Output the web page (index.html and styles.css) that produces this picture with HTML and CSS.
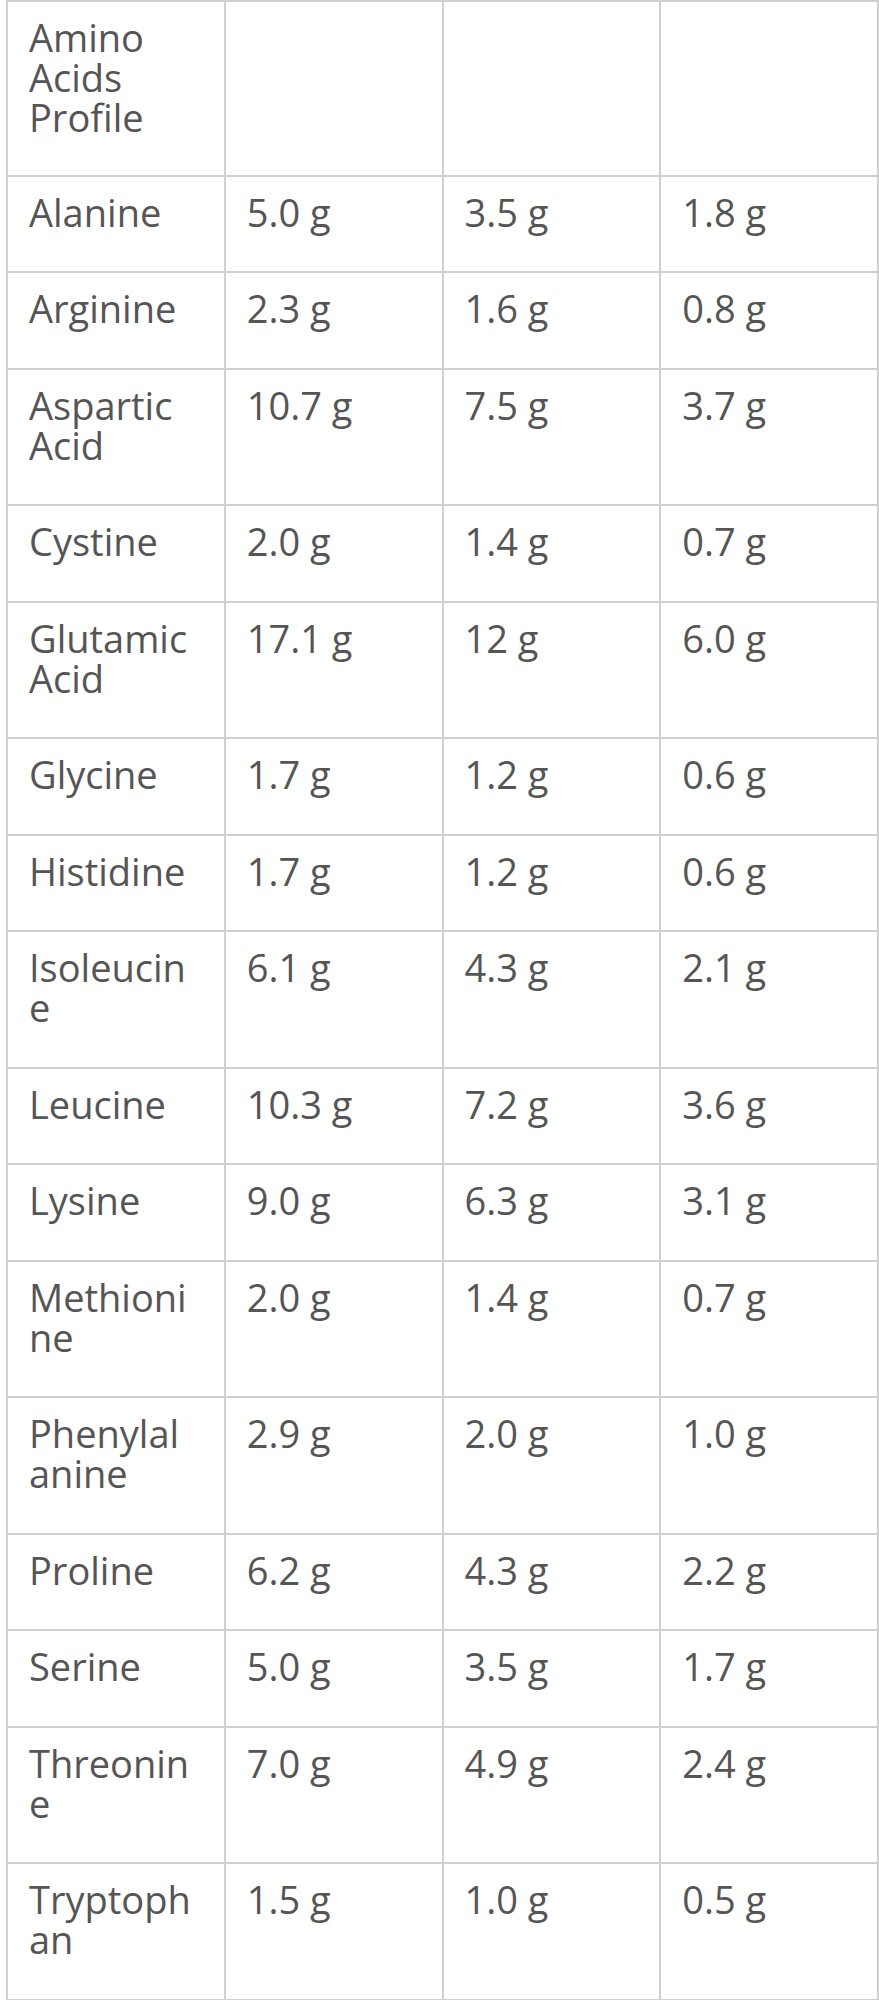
FILE: index.html
```html
<!DOCTYPE html>
<html lang="en">
<head>
<meta charset="utf-8">
<title>Amino Acids Profile</title>
<link rel="stylesheet" href="styles.css">
</head>
<body>
<div class="wrap">
<table class="amino">
  <thead>
    <tr><th>Amino Acids Profile</th><th></th><th></th><th></th></tr>
  </thead>
  <tbody>
    <tr><td>Alanine</td><td>5.0 g</td><td>3.5 g</td><td>1.8 g</td></tr>
    <tr><td>Arginine</td><td>2.3 g</td><td>1.6 g</td><td>0.8 g</td></tr>
    <tr><td>Aspartic Acid</td><td>10.7 g</td><td>7.5 g</td><td>3.7 g</td></tr>
    <tr><td>Cystine</td><td>2.0 g</td><td>1.4 g</td><td>0.7 g</td></tr>
    <tr><td>Glutamic Acid</td><td>17.1 g</td><td>12 g</td><td>6.0 g</td></tr>
    <tr><td>Glycine</td><td>1.7 g</td><td>1.2 g</td><td>0.6 g</td></tr>
    <tr><td>Histidine</td><td>1.7 g</td><td>1.2 g</td><td>0.6 g</td></tr>
    <tr><td>Isoleucine</td><td>6.1 g</td><td>4.3 g</td><td>2.1 g</td></tr>
    <tr><td>Leucine</td><td>10.3 g</td><td>7.2 g</td><td>3.6 g</td></tr>
    <tr><td>Lysine</td><td>9.0 g</td><td>6.3 g</td><td>3.1 g</td></tr>
    <tr><td>Methionine</td><td>2.0 g</td><td>1.4 g</td><td>0.7 g</td></tr>
    <tr><td>Phenylalanine</td><td>2.9 g</td><td>2.0 g</td><td>1.0 g</td></tr>
    <tr><td>Proline</td><td>6.2 g</td><td>4.3 g</td><td>2.2 g</td></tr>
    <tr><td>Serine</td><td>5.0 g</td><td>3.5 g</td><td>1.7 g</td></tr>
    <tr><td>Threonine</td><td>7.0 g</td><td>4.9 g</td><td>2.4 g</td></tr>
    <tr><td>Tryptophan</td><td>1.5 g</td><td>1.0 g</td><td>0.5 g</td></tr>
  </tbody>
</table>
</div>
</body>
</html>
```
FILE: styles.css
```css
html, body {
  margin: 0;
  padding: 0;
  background: #ffffff;
}

.wrap {
  padding-left: 6px;
}

.amino {
  width: 873px;
  table-layout: fixed;
  border-collapse: collapse;
  font-family: "Open Sans", "Liberation Sans", sans-serif;
  font-size: 38px;
  line-height: 40px;
  color: #555555;
}

.amino th,
.amino td {
  border: 2px solid #d0d0d0;
  padding: 15px 29px 39.5px 21px;
  text-align: left;
  vertical-align: top;
  font-weight: normal;
  overflow-wrap: anywhere;
}

.amino th {
  padding-bottom: 37.5px;
}
```
